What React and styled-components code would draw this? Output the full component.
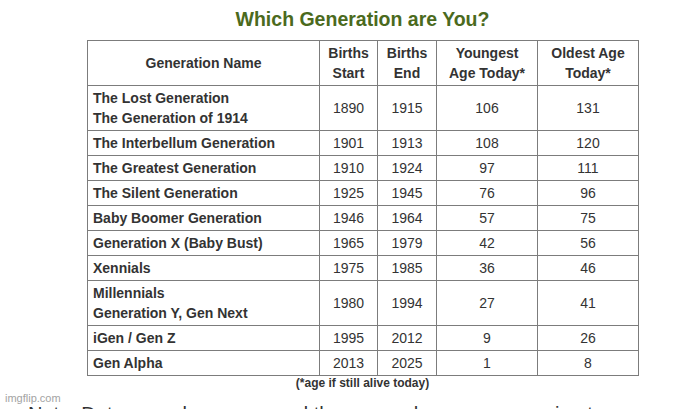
import React from "react";
import styled, { createGlobalStyle } from "styled-components";

const GlobalStyle = createGlobalStyle`
  html, body {
    margin: 0;
    padding: 0;
    background: #ffffff;
  }
  body {
    font-family: "Liberation Sans", Arial, sans-serif;
    color: #333333;
    overflow: hidden;
  }
`;

const Page = styled.div`
  position: relative;
  width: 685px;
  height: 409px;
  overflow: hidden;
`;

const Content = styled.div`
  width: 551px;
  margin-left: 87px;
`;

const Title = styled.h2`
  margin: 0 0 9px;
  padding-top: 7px;
  font-size: 19.5px;
  line-height: 24px;
  font-weight: bold;
  text-align: center;
  color: #4b6a1d;
`;

const Table = styled.table`
  width: 551px;
  border-collapse: collapse;
  table-layout: fixed;
  font-size: 14px;
  line-height: 20px;
  color: #333333;
`;

const Col = styled.col`
  width: ${(p) => p.$w}px;
`;

const HeadCell = styled.th`
  border: 1px solid #7c7c7c;
  padding: 2px 0;
  font-weight: bold;
  text-align: center;
  vertical-align: middle;
  white-space: nowrap;
`;

const NameCell = styled.td`
  border: 1px solid #7c7c7c;
  padding: 2px 5px;
  font-weight: bold;
  text-align: left;
  vertical-align: middle;
  white-space: nowrap;
`;

const NumCell = styled.td`
  border: 1px solid #7c7c7c;
  padding: 2px 0;
  text-align: center;
  vertical-align: middle;
`;

const Footnote = styled.div`
  font-size: 12px;
  line-height: 15px;
  font-weight: bold;
  text-align: center;
  color: #333333;
`;

const Note = styled.div`
  margin-top: 10px;
  padding-left: 28px;
  font-size: 20px;
  line-height: 26px;
  color: #333333;
  white-space: nowrap;
`;

const Watermark = styled.div`
  position: absolute;
  left: 5px;
  top: 391px;
  font-size: 11px;
  line-height: 14px;
  color: #a3a3a3;
`;

const columns = [
  { w: 232, label: ["Generation Name"] },
  { w: 58, label: ["Births", "Start"] },
  { w: 59, label: ["Births", "End"] },
  { w: 101, label: ["Youngest", "Age Today*"] },
  { w: 101, label: ["Oldest Age", "Today*"] },
];

const rows = [
  [["The Lost Generation", "The Generation of 1914"], 1890, 1915, 106, 131],
  [["The Interbellum Generation"], 1901, 1913, 108, 120],
  [["The Greatest Generation"], 1910, 1924, 97, 111],
  [["The Silent Generation"], 1925, 1945, 76, 96],
  [["Baby Boomer Generation"], 1946, 1964, 57, 75],
  [["Generation X (Baby Bust)"], 1965, 1979, 42, 56],
  [["Xennials"], 1975, 1985, 36, 46],
  [["Millennials", "Generation Y, Gen Next"], 1980, 1994, 27, 41],
  [["iGen / Gen Z"], 1995, 2012, 9, 26],
  [["Gen Alpha"], 2013, 2025, 1, 8],
];

const Lines = ({ lines }) =>
  lines.map((line, i) => (
    <React.Fragment key={i}>
      {i > 0 && <br />}
      {line}
    </React.Fragment>
  ));

export default function App() {
  return (
    <Page>
      <GlobalStyle />
      <Content>
        <Title>Which Generation are You?</Title>
        <Table>
          <colgroup>
            {columns.map((c, i) => (
              <Col key={i} $w={c.w} />
            ))}
          </colgroup>
          <thead>
            <tr>
              {columns.map((c, i) => (
                <HeadCell key={i}>
                  <Lines lines={c.label} />
                </HeadCell>
              ))}
            </tr>
          </thead>
          <tbody>
            {rows.map(([name, ...nums], i) => (
              <tr key={i}>
                <NameCell>
                  <Lines lines={name} />
                </NameCell>
                {nums.map((n, j) => (
                  <NumCell key={j}>{n}</NumCell>
                ))}
              </tr>
            ))}
          </tbody>
        </Table>
        <Footnote>(*age if still alive today)</Footnote>
      </Content>
      <Note>Note: Dates vary by source and the ranges here are approximate.</Note>
      <Watermark>imgflip.com</Watermark>
    </Page>
  );
}
